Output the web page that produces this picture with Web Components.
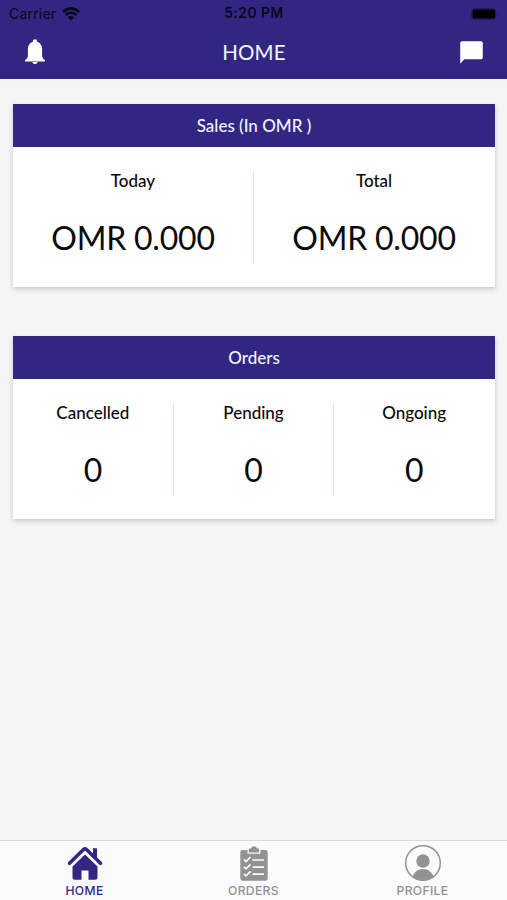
<!DOCTYPE html>
<html lang="en">
<head>
<meta charset="utf-8">
<meta name="viewport" content="width=device-width">
<title>Home</title>
<style>
html,body{margin:0;height:100%;overflow:hidden}
body{background:#f5f5f5;font-family:Lato,"Open Sans",sans-serif;color:#0a0a0a}
</style>
</head>
<body>
<home-screen></home-screen>
<script>
function define(name, render) {
  customElements.define(name, class extends HTMLElement {
    constructor() {
      super();
      this.attachShadow({mode: 'open'}).innerHTML = render(this);
    }
  });
}

define('status-bar', () => `
<style>
:host{display:grid;grid-template-columns:1fr auto 1fr;align-items:center;height:27px;padding:0 8px 0 9px;box-sizing:border-box;
 font:14.2px/27px Inter,sans-serif;color:#08061c}
.left{display:flex;align-items:center;gap:6px}
.carrier{letter-spacing:.1px}
.time{font-weight:600;font-size:13.8px;letter-spacing:.55px}
.right{justify-self:end;display:flex}
svg{display:block}
</style>
<div class="left"><span class="carrier">Carrier</span>
<svg width="18" height="14" viewBox="0 0 18 14" fill="none" stroke="#08061c" stroke-width="2.8"><path d="M1 4.900Q9-2.100 17 4.900M3.700 8Q9 3.300 14.300 8"/><path d="M9 13.600 5.900 10.400Q9 7.800 12.100 10.400Z" fill="#08061c" stroke="none"/></svg></div>
<span class="time">5:20 PM</span>
<div class="right"><svg width="28" height="12" viewBox="0 0 28 12"><rect x=".5" y=".5" width="24" height="11" rx="3" fill="none" stroke="#211958"/><rect x="1.500" y="1.500" width="22.500" height="9" rx="1.800" fill="#000"/><path d="M26 4q2 2 0 4z" fill="#211958"/></svg></div>`);

define('nav-bar', () => `
<style>
:host{display:grid;grid-template-columns:1fr auto 1fr;align-items:center;height:52px;padding:0 23px 2px 24px;box-sizing:border-box;color:#f6f4ff}
.title{font-size:20.5px;line-height:26px;letter-spacing:.1px}
svg{display:block}
.chat{justify-self:end;margin-right:-1px}
</style>
<svg width="22" height="26" viewBox="0 0 22 26" fill="#fff"><path d="M11 .3c1.400 0 2.300 1 2.100 2.500 3.200 1 5 3.700 5 7.100v6.300c0 2.200 1 3.700 2.900 4.900v1.400H1v-1.400c1.900-1.200 2.900-2.700 2.900-4.900V9.900c0-3.400 1.800-6.100 5-7.100C8.700 1.300 9.600.3 11 .3zM8.300 23h5.400c-.5 1.400-1.400 2-2.700 2s-2.200-.6-2.700-2z"/></svg>
<span class="title"><slot></slot></span>
<svg class="chat" width="27" height="27" viewBox="0 0 24 24" fill="#fff"><path d="M20.400 2H3.600C2.700 2 2 2.700 2 3.600V22l3.600-4h14.800c.9 0 1.600-.7 1.600-1.600V3.600c0-.9-.7-1.600-1.600-1.600z"/></svg>`);

define('stat-cell', el => `
<style>
:host{display:block;flex:1 1 0;min-width:0;height:92px;text-align:center;box-sizing:border-box}
:host(:not(:last-of-type)){border-right:1.500px solid #d8edf8}
.label{font-size:17px;line-height:20px;font-weight:500;white-space:nowrap}
.value{font-size:32px;line-height:40px;margin-top:27px;letter-spacing:-.2px;white-space:nowrap}
</style>
<div class="label">${el.getAttribute('label')}</div>
<div class="value"><slot></slot></div>`);

define('stat-card', el => `
<style>
:host{display:block;height:183px;background:#fff;box-shadow:0 2px 5px rgba(0,0,0,.2)}
header{height:43px;line-height:43px;background:#312783;color:#f4f1ff;text-align:center;font-size:17px;font-weight:500}
.cells{display:flex;padding:24px 1px 0 0}
</style>
<header>${el.getAttribute('heading')}</header>
<div class="cells"><slot></slot></div>`);

define('tab-item', () => `
<style>
:host{display:flex;flex:1;flex-direction:column;align-items:center;padding-top:4px;color:#929292;font:500 12.2px/16px Inter,sans-serif;letter-spacing:.3px}
:host([active]){color:#312783}
::slotted(svg){display:block;height:38px}
</style>
<slot name="icon"></slot><span><slot></slot></span>`);

define('tab-bar', () => `
<style>
:host{display:flex;height:60px;box-sizing:border-box;background:#fbfbfb;border-top:1px solid #dadada}
</style><slot></slot>`);

define('home-screen', () => `
<style>
:host{display:flex;flex-direction:column;height:100vh;background:#f5f5f5}
.top{background:#312783;height:79px}
main{flex:1;display:flex;flex-direction:column;gap:49px;padding:24.600px 12px 0 13px}
</style>
<div class="top"><status-bar></status-bar><nav-bar>HOME</nav-bar></div>
<main>
<stat-card heading="Sales (In OMR )">
<stat-cell label="Today">OMR 0.000</stat-cell><stat-cell label="Total">OMR 0.000</stat-cell>
</stat-card>
<stat-card heading="Orders">
<stat-cell label="Cancelled">0</stat-cell><stat-cell label="Pending">0</stat-cell><stat-cell label="Ongoing">0</stat-cell>
</stat-card>
</main>
<tab-bar>
<tab-item active><svg slot="icon" width="36" height="38" viewBox="0 0 36 38"><path d="M2.500 18.300 16.500 4.600Q18 3.200 19.500 4.600L33.500 18.300" fill="none" stroke="#312783" stroke-width="3.500" stroke-linecap="round" stroke-linejoin="round"/><path d="M26 3.200h4v12l-4-4z" fill="#312783"/><path d="M18 9.500 30.500 21.500v10.800q0 2.500-2.500 2.500h-6.500V25.500h-7v9.300H8q-2.500 0-2.500-2.500V21.500z" fill="#312783"/></svg>HOME</tab-item>
<tab-item><svg slot="icon" width="30" height="38" viewBox="0 0 30 38"><path d="M3.700 5H8.500V8.700h13V5h4.800q2.400 0 2.400 2.400V33.300q0 2.400-2.400 2.400H3.700q-2.400 0-2.400-2.400V7.400Q1.300 5 3.700 5z" fill="#929292"/><path d="M9.800 7.500V4.300Q9.800 3.600 10.500 3.600H12Q12.700 1.300 15 1.300T18 3.600h1.500q.7 0 .7.700V7.500z" fill="#929292"/><g fill="none" stroke="#fbfbfb" stroke-width="1.700"><path d="m5 14.500 2 2 4.500-4.500M5 21.800l2 2 4.500-4.500M5 28.800l2 2 4.500-4.500M13.500 15H25M13.500 22.200H25M13.500 29.200H25"/></g></svg>ORDERS</tab-item>
<tab-item><svg slot="icon" width="38" height="38" viewBox="0 0 38 38"><defs><clipPath id="face"><circle cx="19" cy="18" r="17"/></clipPath></defs><circle cx="19" cy="18" r="17.300" fill="none" stroke="#929292" stroke-width="1.500"/><circle cx="19" cy="16" r="6.700" fill="#929292"/><ellipse cx="19" cy="35" rx="11" ry="11" fill="#929292" clip-path="url(#face)"/></svg>PROFILE</tab-item>
</tab-bar>`);
</script>
</body>
</html>
